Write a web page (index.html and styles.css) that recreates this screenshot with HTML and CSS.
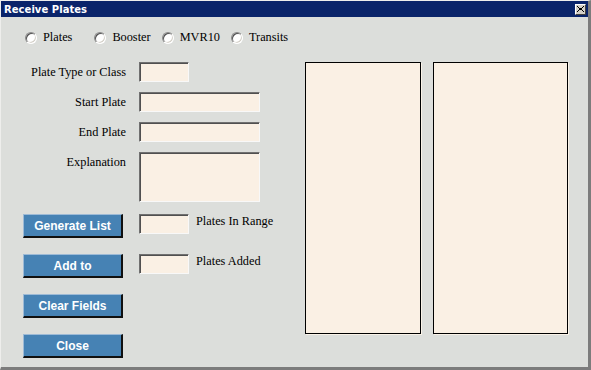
FILE: index.html
```html
<!DOCTYPE html>
<html lang="en">
<head>
<meta charset="utf-8">
<title>Receive Plates</title>
<link rel="stylesheet" href="styles.css">
</head>
<body>
<div class="window">
  <div class="titlebar">
    <span class="title">Receive Plates</span>
    <span class="close" aria-label="Close">
      <svg width="7" height="6" viewBox="0 0 7 6"><path d="M0 0h1v1h-1zM1 1h1v1h-1zM2 2h3v2h-3zM5 1h1v1h-1zM6 0h1v1h-1zM1 4h1v1h-1zM0 5h1v1h-1zM5 4h1v1h-1zM6 5h1v1h-1z" fill="#000"/></svg>
    </span>
  </div>
  <div class="content">
    <div class="radios">
      <label class="radio radio-first"><input type="radio" name="kind"><span>Plates</span></label>
      <label class="radio"><input type="radio" name="kind"><span>Booster</span></label>
      <label class="radio"><input type="radio" name="kind"><span>MVR10</span></label>
      <label class="radio"><input type="radio" name="kind"><span>Transits</span></label>
    </div>
    <div class="main">
      <div class="left">
        <div class="fields">
          <label class="flabel">Plate Type or Class</label>
          <input class="field field-short" type="text">
          <label class="flabel">Start Plate</label>
          <input class="field" type="text">
          <label class="flabel">End Plate</label>
          <input class="field" type="text">
          <label class="flabel">Explanation</label>
          <textarea class="field field-area"></textarea>
        </div>
        <div class="actions">
          <div class="action">
            <button class="btn">Generate List</button>
            <input class="field field-short" type="text">
            <span class="alabel">Plates In Range</span>
          </div>
          <div class="action">
            <button class="btn">Add to</button>
            <input class="field field-short" type="text">
            <span class="alabel">Plates Added</span>
          </div>
          <div class="action">
            <button class="btn">Clear Fields</button>
          </div>
          <div class="action">
            <button class="btn">Close</button>
          </div>
        </div>
      </div>
      <div class="list list-a" role="listbox"></div>
      <div class="list list-b" role="listbox"></div>
    </div>
  </div>
</div>
</body>
</html>
```

FILE: styles.css
```css
html, body {
  margin: 0;
  padding: 0;
  background: #dcdedb;
}

.window {
  box-sizing: border-box;
  width: 591px;
  height: 370px;
  border-top: 1px solid #eeeeec;
  border-left: 1px solid #eeeeec;
  border-right: 3px solid #7c7c7c;
  border-bottom: 3px solid #7c7c7c;
  background: #dcdedb;
  display: flex;
  flex-direction: column;
  font-family: "Liberation Serif", "Times New Roman", serif;
  font-size: 12.3px;
  color: #000;
}

.titlebar {
  height: 16px;
  background: #0a246a;
  display: flex;
  align-items: center;
  justify-content: space-between;
  padding: 0 2px 0 3px;
}

.title {
  color: #fff;
  font-family: "DejaVu Sans", Verdana, sans-serif;
  font-weight: bold;
  font-size: 10px;
  letter-spacing: 0.05px;
}

.close {
  box-sizing: border-box;
  width: 11px;
  height: 11px;
  background: #d4d0c8;
  border-top: 1px solid #fff;
  border-left: 1px solid #fff;
  border-right: 1px solid #404040;
  border-bottom: 1px solid #404040;
  display: flex;
  align-items: center;
  justify-content: center;
}

.content {
  padding: 12px 0 0 0;
}

.radios {
  display: flex;
  align-items: center;
  height: 17px;
  padding-left: 24px;
}

.radio {
  display: flex;
  align-items: center;
  gap: 6px;
  margin-right: 11px;
  line-height: 17px;
}

.radio-first {
  margin-right: 22px;
}

.radio input {
  appearance: none;
  -webkit-appearance: none;
  box-sizing: border-box;
  width: 12px;
  height: 12px;
  margin: 0;
  border-radius: 50%;
  background: #fff;
  border: 1px solid;
  border-color: #8a8a8a #ffffff #ffffff #8a8a8a;
  box-shadow: inset 1px 1px 0 #505050, inset -1px -1px 0 #d4d0c8;
}

.main {
  display: flex;
  align-items: flex-start;
  margin-top: 16px;
  padding-left: 22px;
}

.left {
  width: 282px;
}

.fields {
  display: grid;
  grid-template-columns: 103px 121px;
  column-gap: 13px;
  row-gap: 10px;
  align-items: start;
}

.flabel {
  text-align: right;
  height: 20px;
  line-height: 21px;
  white-space: nowrap;
}

.field {
  box-sizing: border-box;
  height: 20px;
  width: 121px;
  margin: 0;
  padding: 0 2px;
  background: #faf0e4;
  border: 1px solid;
  border-color: #707070 #f8f8f8 #f8f8f8 #707070;
  box-shadow: inset 1px 1px 0 #505050;
  font-family: inherit;
  font-size: 12px;
  outline: none;
  resize: none;
  display: block;
}

.field-short {
  width: 50px;
}

.field-area {
  height: 50px;
}

.actions {
  display: flex;
  flex-direction: column;
  gap: 16px;
  margin-top: 12px;
}

.action {
  display: flex;
  align-items: flex-start;
  height: 24px;
}

.btn {
  box-sizing: border-box;
  width: 100px;
  height: 24px;
  margin: 0 16px 0 0;
  padding: 0;
  background: #4682b4;
  color: #fff;
  font-family: "Liberation Sans", Arial, sans-serif;
  font-weight: bold;
  font-size: 12px;
  border-top: 1px solid #9dbad6;
  border-left: 1px solid #9dbad6;
  border-right: 2px solid #101010;
  border-bottom: 2px solid #101010;
  cursor: pointer;
}

.alabel {
  margin-left: 7px;
  line-height: 15px;
  white-space: nowrap;
}

.list {
  box-sizing: border-box;
  height: 272px;
  background: #faf0e4;
  border: 1px solid #000;
  box-shadow: 1px 1px 0 #faf3e8;
}

.list-a {
  width: 116px;
}

.list-b {
  width: 135px;
  margin-left: 12px;
}
```
